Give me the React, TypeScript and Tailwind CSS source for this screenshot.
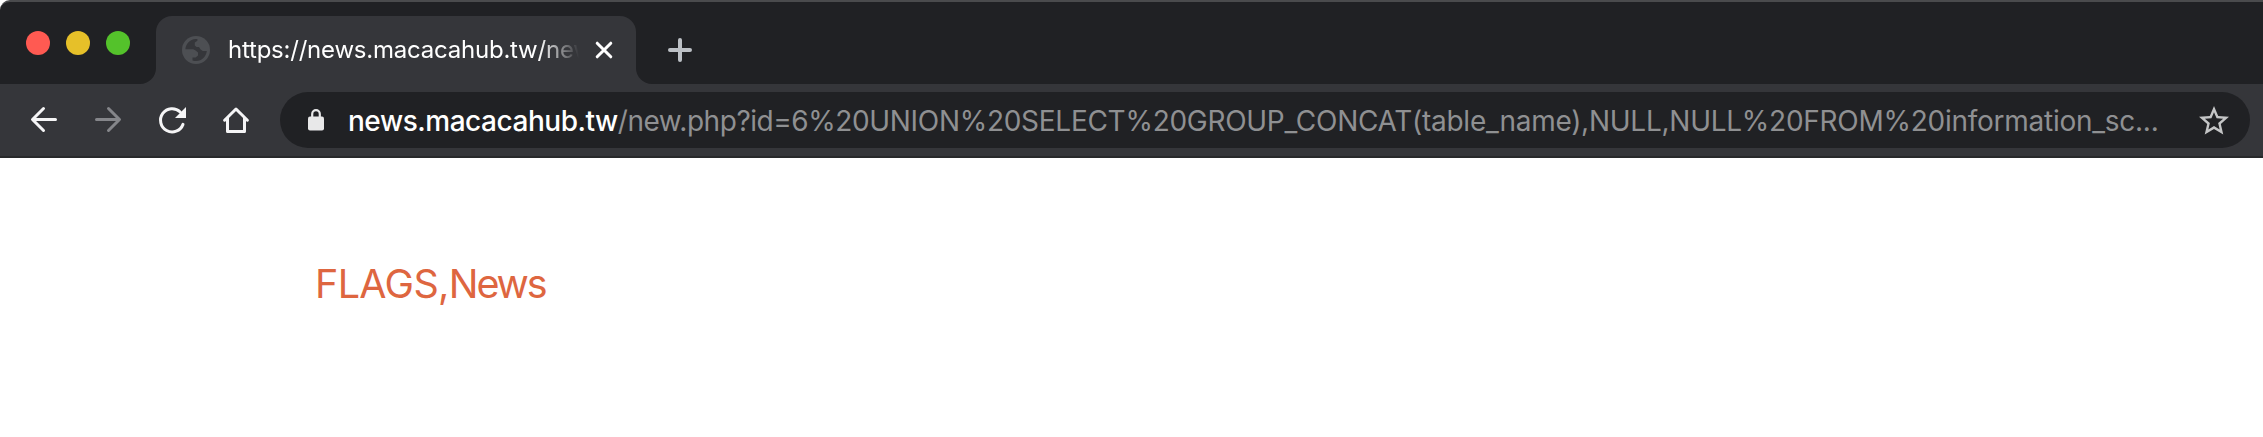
function TrafficLights() {
  return (
    <div className="flex shrink-0 gap-4 pt-[29px] pl-[26px]">
      <span className="size-6 rounded-full bg-[#ff5a52]" />
      <span className="size-6 rounded-full bg-[#e6c029]" />
      <span className="size-6 rounded-full bg-[#54c22b]" />
    </div>
  );
}

function GlobeIcon() {
  return (
    <svg className="size-7 shrink-0" viewBox="0 0 28 28">
      <circle cx="14" cy="14" r="14" fill="#4d4f53" />
      <path
        d="M3.4 13.2C3.7 8 8 3.6 13.6 3.1h1.8v1.6l-2.6 1.8v3l1.8 1.4h2.4l1.6 2.6 2.2 1.6h4C24.3 20.6 20 25 14.2 25c-1.3 0-2.5-.2-3.7-.6v-2.8h3.1l2.4-2.2v-2.8l-2.4-2-2.4-1.4Z"
        fill="#35363a"
      />
    </svg>
  );
}

function Tab() {
  return (
    <div className="flex h-full items-end">
      <svg className="size-4 shrink-0 text-[#35363a]" viewBox="0 0 16 16" fill="currentColor">
        <path d="M16 0v16H0A16 16 0 0 0 16 0Z" />
      </svg>
      <div className="flex h-[68px] w-[480px] items-center rounded-t-2xl bg-[#35363a] pl-[26px]">
        <GlobeIcon />
        <span className="ml-[18px] w-[351px] shrink-0 overflow-hidden text-[24px] leading-8 font-[420] tracking-[-0.22px] whitespace-nowrap text-white [mask-image:linear-gradient(to_right,black_311px,transparent_351px)]">
          https://news.macacahub.tw/new
        </span>
        <svg className="ml-4 size-[18px] shrink-0" viewBox="0 0 18 18" fill="none" stroke="#fff" strokeWidth="3" strokeLinecap="round">
          <path d="m2.2 2.2 13.6 13.6M15.8 2.2 2.2 15.8" />
        </svg>
      </div>
      <svg className="size-4 shrink-0 text-[#35363a]" viewBox="0 0 16 16" fill="currentColor">
        <path d="M0 0v16h16A16 16 0 0 1 0 0Z" />
      </svg>
    </div>
  );
}

function NavButtons() {
  return (
    <div className="flex shrink-0 items-center gap-8 pl-7">
      <svg className="size-8" viewBox="0 0 32 32" fill="none" stroke="#f5f5f6" strokeWidth="3" strokeLinecap="round" strokeLinejoin="round">
        <path d="M27.5 15.5H5M15.5 4.5l-11 11 11 11" />
      </svg>
      <svg className="size-8" viewBox="0 0 32 32" fill="none" stroke="#85868a" strokeWidth="3" strokeLinecap="round" strokeLinejoin="round">
        <path d="M4.5 15.5H27M16.5 4.5l11 11-11 11" />
      </svg>
      <svg className="size-8" viewBox="0 0 32 32" fill="none">
        <path d="M27 20.4A11.6 11.6 0 1 1 24.2 8" stroke="#f5f5f6" strokeWidth="3" strokeLinecap="round" />
        <path d="M30 3v11H19Z" fill="#f5f5f6" />
      </svg>
      <svg className="size-8" viewBox="0 0 32 32" fill="none" stroke="#f5f5f6" strokeWidth="3" strokeLinecap="round">
        <path d="M4.6 16.2 16 5l11.4 11.2M7.5 14v13.5h17V14" strokeLinejoin="round" />
      </svg>
    </div>
  );
}

function AddressBar() {
  return (
    <div className="ml-[28px] flex h-14 w-[1970px] shrink-0 items-center rounded-full bg-[#202124] pl-7">
      <svg className="h-[22px] w-4 shrink-0" viewBox="0 0 16 22" fill="#e8e8e9">
        <rect x="0" y="7.5" width="16" height="14" rx="2" />
        <path d="M4.2 9V5a3.8 3.8 0 0 1 7.6 0v4" fill="none" stroke="#e8e8e9" strokeWidth="2.2" />
      </svg>
      <div className="mt-px ml-6 flex w-[1848px] shrink-0 text-[28px] leading-9 whitespace-nowrap text-[#8f9092]">
        <span className="font-[450] tracking-[-0.47px] text-white">news.macacahub.tw</span>
        <span className="tracking-[-0.45px]">/new.php?id=6%20</span>
        <span className="tracking-[-0.28px]">UNION%20SELECT%20GROUP_CONCAT</span>
        <span className="tracking-[-0.26px]">(table_name),NULL,NULL%20FROM%20information_sc...</span>
      </div>
      <svg className="mt-px size-9 shrink-0" viewBox="0 0 24 24" fill="#c4c5c6">
        <path d="M22 9.24l-7.19-.62L12 2 9.19 8.63 2 9.24l5.46 4.73L5.82 21 12 17.27 18.18 21l-1.63-7.03L22 9.24zM12 15.4l-3.76 2.27 1-4.28-3.32-2.88 4.38-.38L12 6.1l1.71 4.04 4.38.38-3.32 2.88 1 4.28L12 15.4z" />
      </svg>
    </div>
  );
}

export default function App() {
  return (
    <div className="flex h-[437px] w-full flex-col overflow-hidden bg-white font-['Inter','Noto_Sans',sans-serif]">
      <header className="flex shrink-0 flex-col overflow-hidden rounded-tl-[10px] border-t-2 border-[#4a4b4d] bg-[#202124]">
        <div className="flex h-[82px] items-start">
          <TrafficLights />
          <div className="ml-[10px] flex h-full">
            <Tab />
          </div>
          <svg className="mt-9 ml-4 size-6 shrink-0" viewBox="0 0 24 24" fill="none" stroke="#bdc1c6" strokeWidth="4" strokeLinecap="round">
            <path d="M12 2v20M2 12h20" />
          </svg>
        </div>
        <div className="flex h-[74px] items-center border-b-2 border-[#28292b] bg-[#35363a]">
          <NavButtons />
          <AddressBar />
        </div>
      </header>
      <main className="pt-[101px] pl-[315px]">
        <p className="text-[39.5px] leading-[50px] tracking-[-0.65px] text-[#de6640]">
          FLAGS,<span className="tracking-[-2.2px]">News</span>
        </p>
      </main>
    </div>
  );
}
